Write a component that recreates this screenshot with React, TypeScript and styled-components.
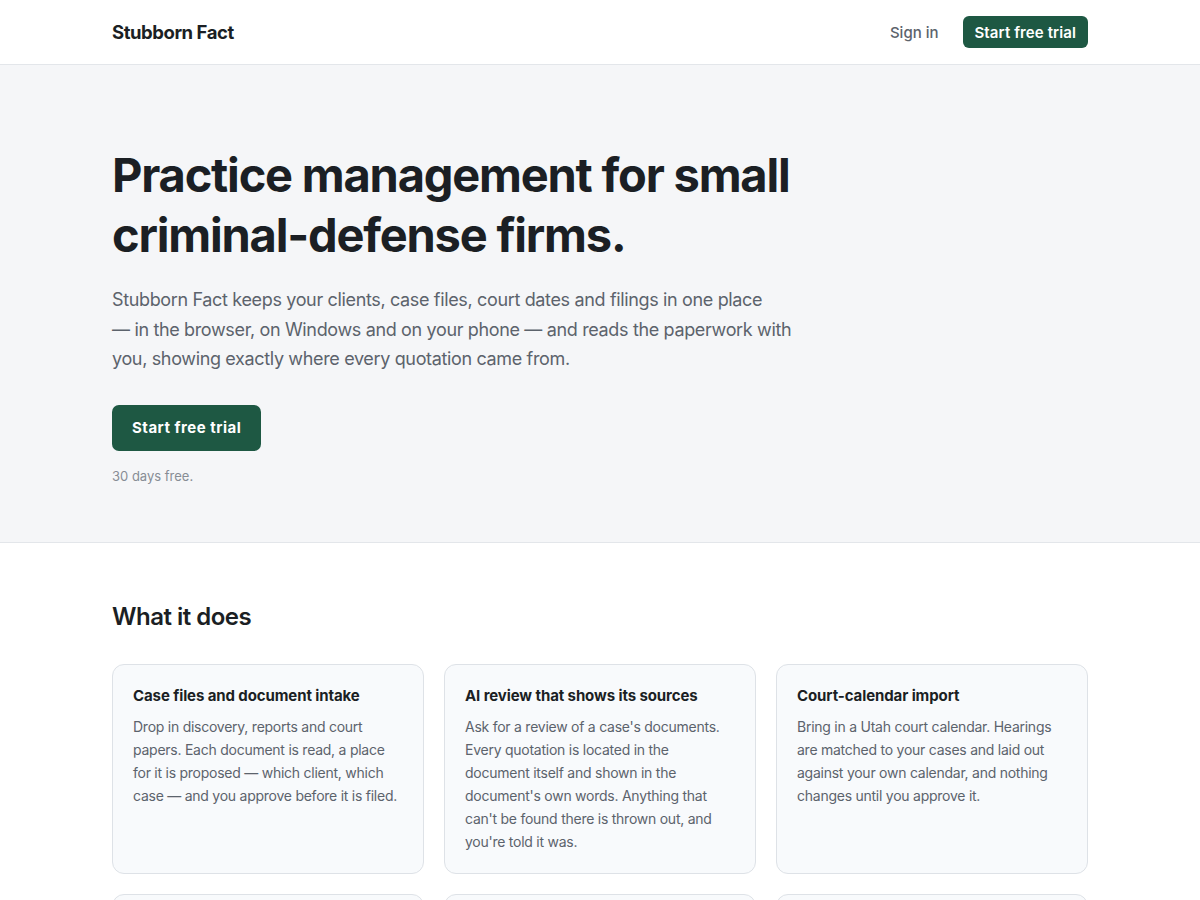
import * as React from 'react'
import styled, { createGlobalStyle } from 'styled-components'

const GlobalStyle = createGlobalStyle`
  html, body {
    margin: 0;
    padding: 0;
    background: #ffffff;
  }
  body {
    font-family: Inter, 'Liberation Sans', sans-serif;
    color: #1b1f24;
    -webkit-font-smoothing: antialiased;
  }
  * {
    box-sizing: border-box;
  }
`

const Container = styled.div`
  width: 976px;
  margin: 0 auto;
`

const Header = styled.header`
  height: 65px;
  border-bottom: 1px solid #e3e6ea;
  background: #ffffff;
`

const HeaderRow = styled(Container)`
  height: 64px;
  display: flex;
  align-items: center;
  justify-content: space-between;
`

const Brand = styled.div`
  font-size: 18.5px;
  font-weight: 700;
  letter-spacing: -0.45px;
  color: #1b1f24;
`

const Nav = styled.nav`
  display: flex;
  align-items: center;
  gap: 24px;
`

const NavLink = styled.a`
  font-size: 15px;
  font-weight: 500;
  color: #5c636c;
  text-decoration: none;
`

const Button = styled.a<{ $size?: 'sm' | 'lg' }>`
  display: inline-flex;
  align-items: center;
  justify-content: center;
  background: #1e5843;
  color: #ffffff;
  font-weight: ${p => (p.$size === 'lg' ? 700 : 600)};
  text-decoration: none;
  border-radius: ${p => (p.$size === 'lg' ? '7px' : '6px')};
  height: ${p => (p.$size === 'lg' ? '46px' : '32px')};
  padding: ${p => (p.$size === 'lg' ? '0 20px' : '0 12px')};
  font-size: 15px;
  letter-spacing: ${p => (p.$size === 'lg' ? '0.5px' : '0.1px')};
`

const Hero = styled.section`
  background: #f5f6f8;
  border-bottom: 1px solid #e3e6ea;
  padding: 80px 0 56px;
`

const Headline = styled.h1`
  margin: 0;
  max-width: 720px;
  font-size: 47px;
  line-height: 60px;
  font-weight: 700;
  letter-spacing: -1.2px;
  color: #1b1f24;
`

const Lead = styled.p`
  margin: 20px 0 0;
  max-width: 690px;
  font-size: 18px;
  line-height: 29.5px;
  letter-spacing: -0.35px;
  color: #5c636c;
`

const CtaRow = styled.div`
  margin-top: 31px;
`

const Note = styled.p`
  margin: 15px 0 0;
  font-size: 13px;
  line-height: 20px;
  color: #878d95;
`

const Features = styled.section`
  padding: 59px 0 40px;
`

const SectionTitle = styled.h2`
  margin: 0 0 32px;
  font-size: 24px;
  line-height: 30px;
  font-weight: 600;
  letter-spacing: -0.5px;
  color: #1b1f24;
`

const Grid = styled.div`
  display: grid;
  grid-template-columns: repeat(3, 1fr);
  gap: 20px;
`

const Card = styled.div`
  min-height: 208px;
  padding: 20px;
  background: #f8fafc;
  border: 1px solid #dee2e7;
  border-radius: 12px;
`

const CardTitle = styled.h3`
  margin: 0 0 8px;
  font-size: 15px;
  line-height: 22px;
  font-weight: 700;
  letter-spacing: -0.1px;
  color: #1b1f24;
`

const CardText = styled.p`
  margin: 0;
  font-size: 14px;
  line-height: 23px;
  letter-spacing: -0.25px;
  color: #5c636c;
`

const features = [
  {
    title: 'Case files and document intake',
    text: 'Drop in discovery, reports and court papers. Each document is read, a place for it is proposed — which client, which case — and you approve before it is filed.',
  },
  {
    title: 'AI review that shows its sources',
    text: "Ask for a review of a case's documents. Every quotation is located in the document itself and shown in the document's own words. Anything that can't be found there is thrown out, and you're told it was.",
  },
  {
    title: 'Court-calendar import',
    text: 'Bring in a Utah court calendar. Hearings are matched to your cases and laid out against your own calendar, and nothing changes until you approve it.',
  },
  {
    title: 'Deadlines and reminders',
    text: 'Every hearing and filing date is tracked.',
  },
  {
    title: 'Clients and contacts',
    text: 'Keep client details together.',
  },
  {
    title: 'Windows and phone apps',
    text: 'Work from wherever you are.',
  },
]

export default function App() {
  return (
    <>
      <GlobalStyle />
      <Header>
        <HeaderRow>
          <Brand>Stubborn Fact</Brand>
          <Nav>
            <NavLink href="#">Sign in</NavLink>
            <Button href="#">Start free trial</Button>
          </Nav>
        </HeaderRow>
      </Header>
      <Hero>
        <Container>
          <Headline>Practice management for small criminal-defense firms.</Headline>
          <Lead>
            Stubborn Fact keeps your clients, case files, court dates and filings in one place —{'\u00a0'}in the
            browser, on Windows and on your phone — and reads the paperwork with you, showing exactly where
            every quotation came from.
          </Lead>
          <CtaRow>
            <Button href="#" $size="lg">Start free trial</Button>
          </CtaRow>
          <Note>30 days free.</Note>
        </Container>
      </Hero>
      <Features>
        <Container>
          <SectionTitle>What it does</SectionTitle>
          <Grid>
            {features.map(f => (
              <Card key={f.title}>
                <CardTitle>{f.title}</CardTitle>
                <CardText>{f.text}</CardText>
              </Card>
            ))}
          </Grid>
        </Container>
      </Features>
    </>
  )
}
